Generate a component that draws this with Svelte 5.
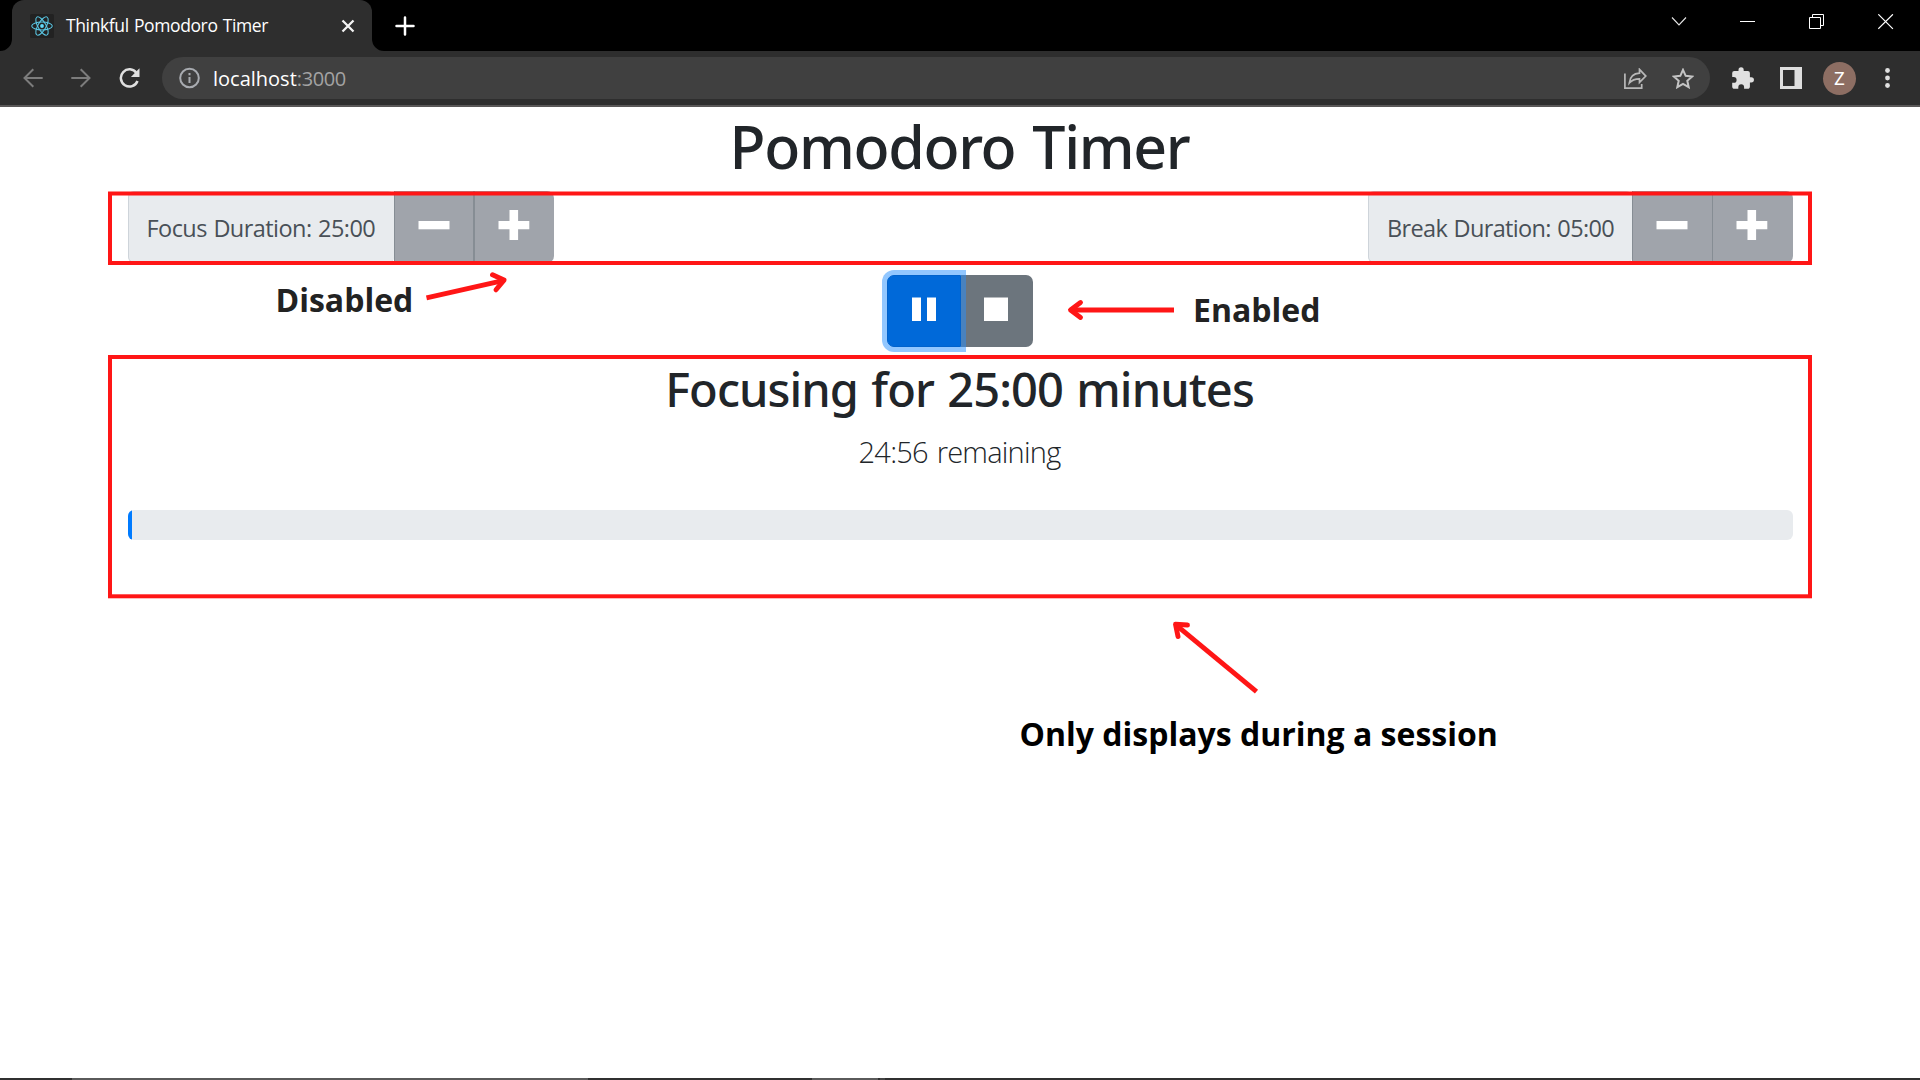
<script>
  const focusLabel = 'Focus Duration: 25:00';
  const breakLabel = 'Break Duration: 05:00';
  const progress = 0.25;
</script>

{#snippet minus()}
  <svg class="glyph" width="32" height="32" viewBox="0 0 32 32"><path d="M.5 12h31v8.3H.5z" fill="#fff" /></svg>
{/snippet}

{#snippet plus()}
  <svg class="glyph" width="32" height="32" viewBox="0 0 32 32"><path d="M.5 12h11V1h8.6v11h11.2v8.3H20.100V31h-8.600V20.300H.5z" fill="#fff" /></svg>
{/snippet}

<div class="window">
  <header class="tabs">
    <div class="tab">
      <svg class="favicon" width="24" height="24" viewBox="0 0 24 24">
        <rect width="24" height="24" rx="1.500" fill="#222" />
        <g fill="none" stroke="#61dafb" stroke-width="1.050" opacity=".9">
          <ellipse cx="12" cy="12" rx="10.300" ry="4" />
          <ellipse cx="12" cy="12" rx="10.300" ry="4" transform="rotate(60 12 12)" />
          <ellipse cx="12" cy="12" rx="10.300" ry="4" transform="rotate(120 12 12)" />
        </g>
        <circle cx="12" cy="12" r="1.900" fill="#61dafb" />
      </svg>
      <span class="tab-title">Thinkful Pomodoro Timer</span>
      <svg class="tab-close" width="14" height="14" viewBox="0 0 14 14"><path d="M1.500 1.500l11 11M12.500 1.500l-11 11" stroke="#f2f2f2" stroke-width="2.300" /></svg>
      <svg class="flare left" width="12" height="12" viewBox="0 0 12 12"><path d="M12 0v12H0A12 12 0 0 0 12 0z" fill="#2e2e2e" /></svg>
      <svg class="flare right" width="12" height="12" viewBox="0 0 12 12"><path d="M0 0v12h12A12 12 0 0 1 0 0z" fill="#2e2e2e" /></svg>
    </div>
    <svg class="new-tab" width="20" height="20" viewBox="0 0 20 20"><path d="M10 1.500v17M1.500 10h17" stroke="#fff" stroke-width="2.500" stroke-linecap="round" /></svg>
    <div class="controls">
      <svg width="16" height="16" viewBox="0 0 16 16"><path d="M1 3.500l7 7.500 7-7.500" fill="none" stroke="#e6e6e6" stroke-width="1.100" /></svg>
      <svg width="16" height="16" viewBox="0 0 16 16"><path d="M0 7.500h15" stroke="#fff" stroke-width="1" /></svg>
      <svg width="16" height="16" viewBox="0 0 16 16"><path d="M.5 3.500h11v11H.5zM3.500 3.500v-3h11v11h-3" fill="none" stroke="#fff" /></svg>
      <svg width="16" height="16" viewBox="0 0 16 16"><path d="M.3.300l14.600 14.600M14.900.300L.3 14.900" stroke="#fff" stroke-width="1.200" /></svg>
    </div>
  </header>

  <nav class="toolbar">
    <svg class="back" width="20" height="20" viewBox="0 0 20 20"><path d="M19.700 10H1.500M10.300 1.200L1.500 10l8.800 8.800" fill="none" stroke="#7c7c7c" stroke-width="2" /></svg>
    <svg class="forward" width="20" height="20" viewBox="0 0 20 20"><path d="M.3 10h18.200M9.700 1.200l8.800 8.800-8.800 8.800" fill="none" stroke="#7c7c7c" stroke-width="2" /></svg>
    <svg class="reload" width="21" height="20" viewBox="0 0 21 20"><path d="M17.500 5A8.600 8.600 0 1 0 18.500 13" fill="none" stroke="#e0e0e0" stroke-width="2.500" /><path d="M20.500.300v8.600h-8.600z" fill="#e0e0e0" /></svg>
    <div class="address">
      <svg class="info" width="22" height="22" viewBox="0 0 22 22"><circle cx="10.500" cy="11" r="9.300" fill="none" stroke="#a8abb0" stroke-width="2" /><path d="M9.500 10h2v6h-2zM9.500 6h2v2.200h-2z" fill="#a8abb0" /></svg>
      <span class="url">localhost<span>:3000</span></span>
      <svg class="share" width="23" height="21" viewBox="0 0 23 21"><g fill="none" stroke="#b8b8b8" stroke-width="1.700"><path d="M.9 5.500v14.600h16.800v-4" /><path d="M5.300 15C6 9 9.500 5.500 15.500 5.200V1.400l6.300 6.700-6.300 6.300v-3.600c-4.600 0-7.600 1.200-10.200 4.200z" /></g></svg>
      <svg class="star" width="22" height="21" viewBox="0 0 22 21"><path d="M11 1.800l2.700 6 6.500.7-4.900 4.300 1.400 6.400L11 15.900l-5.700 3.300 1.400-6.400L1.800 8.500l6.500-.7z" fill="none" stroke="#c4c4c4" stroke-width="2" /></svg>
    </div>
    <svg class="puzzle" width="22" height="22" viewBox="0 0 22 22"><path d="M19.300 10.200h-1.400V6.100a2.100 2.100 0 0 0-2.100-2.100h-4.100V2.900a2.600 2.600 0 0 0-5.200 0V4H2.300A2.100 2.100 0 0 0 .2 6.100V10h1.500a2.900 2.900 0 0 1 0 5.800H.2v3.900c0 1.200.9 2.100 2.100 2.100h4v-1.600a2.900 2.900 0 0 1 5.800 0v1.600h3.700c1.200 0 2.100-.9 2.100-2.100v-4.200h1.400a2.650 2.650 0 0 0 0-5.300z" fill="#e0e0e0" /></svg>
    <svg class="panel" width="22" height="22" viewBox="0 0 22 22"><path fill-rule="evenodd" d="M0 0h22v22H0zM3 3v16h11.500V3z" fill="#dedede" /></svg>
    <div class="avatar">Z</div>
    <svg class="dots" width="5" height="20" viewBox="0 0 5 20" fill="#e0e0e0"><circle cx="2.500" cy="2.500" r="2.400" /><circle cx="2.500" cy="10" r="2.400" /><circle cx="2.500" cy="17.500" r="2.400" /></svg>
  </nav>

  <main>
    <h1>Pomodoro Timer</h1>
    <section class="durations">
      <div class="group focus">
        <span class="label">{focusLabel}</span>
        <button disabled aria-label="Decrease focus">{@render minus()}</button>
        <button disabled aria-label="Increase focus">{@render plus()}</button>
      </div>
      <div class="group break">
        <span class="label">{breakLabel}</span>
        <button disabled aria-label="Decrease break">{@render minus()}</button>
        <button disabled aria-label="Increase break">{@render plus()}</button>
      </div>
    </section>
    <section class="playback">
      <button class="pause" aria-label="Pause">
        <svg width="24" height="24" viewBox="0 0 24 24"><path d="M0 .500h9V24H0zM15 .500h9V24h-9z" fill="#fff" /></svg>
      </button>
      <button class="stop" aria-label="Stop">
        <svg width="24" height="24" viewBox="0 0 24 24"><path d="M0 .500h24V24H0z" fill="#fff" /></svg>
      </button>
    </section>
    <h2>Focusing for 25:00 minutes</h2>
    <p class="lead">24:56 remaining</p>
    <div class="progress"><div class="bar" style="width: {progress}%"></div></div>
  </main>

  <footer class="taskbar"><i class="wide"></i><i class="short"></i><i class="sliver"></i></footer>

  <svg class="marks" width="1920" height="1080" viewBox="0 0 1920 1080" fill="none" stroke="#ff1616">
    <g stroke-width="4">
      <rect x="110" y="193.500" width="1700" height="69.500" />
      <rect x="110" y="357" width="1700" height="239.300" />
    </g>
    <g stroke-width="4.900" stroke-linejoin="round">
      <path d="M426.500 297.800L503 280.600" />
      <path d="M492.500 274.800L504 280.100L496 289.800" stroke-linecap="round" />
      <path d="M1174 310H1071" />
      <path d="M1080.500 302.500L1070.500 310l10 7.500" stroke-linecap="round" />
      <path d="M1256.500 691.600L1176.500 625.300" />
      <path d="M1187.500 625L1175.500 624.300l2.500 12.200" stroke-linecap="round" />
    </g>
  </svg>
  <span class="note disabled">Disabled</span>
  <span class="note enabled">Enabled</span>
  <span class="note session">Only displays during a session</span>
</div>

<style>
  :global(body) { margin: 0; background: #fff; overflow: hidden; }
  .window {
    position: relative;
    display: flex;
    flex-direction: column;
    width: 1920px;
    height: 1080px;
    overflow: hidden;
    font-family: "Open Sans", "Noto Sans", sans-serif;
    background: #fff;
  }
  svg { display: block; flex: none; }
  .tabs { display: flex; height: 51px; background: #000; }
  .tab {
    position: relative;
    display: flex;
    align-items: flex-start;
    box-sizing: border-box;
    width: 360px;
    margin-left: 12px;
    padding: 0 17px 0 18px;
    border-radius: 12px 12px 0 0;
    background: #2e2e2e;
  }
  .favicon { margin-top: 14px; }
  .tab-title {
    flex: 1;
    margin: 13px 0 0 12px;
    font-size: 17.5px;
    line-height: 24px;
    letter-spacing: -.38px;
    word-spacing: 1px;
    color: #fff;
    white-space: nowrap;
  }
  .tab-close { margin-top: 18.500px; }
  .flare { position: absolute; bottom: 0; }
  .left { left: -12px; }
  .right { right: -12px; }
  .new-tab { margin: 15.500px 0 0 23px; }
  .controls { display: flex; gap: 53px; margin: 14px 26px 0 auto; }

  .toolbar {
    display: flex;
    align-items: center;
    box-sizing: border-box;
    height: 56px;
    border-bottom: 2px solid #595757;
    background: #2e2e2e;
  }
  .back { margin-left: 23px; }
  .forward { margin-left: 28px; }
  .reload { margin: 0 22px 0 28px; }
  .address {
    display: flex;
    align-items: center;
    box-sizing: border-box;
    width: 1548px;
    height: 42px;
    padding: 0 16px 0 17px;
    border-radius: 21px;
    background: #404040;
  }
  .url {
    flex: 1;
    margin-left: 12px;
    padding-top: 1px;
    font-size: 20px;
    line-height: 28px;
    color: #fff;
  }
  .url span { color: #a3a3a3; letter-spacing: -.4px; }
  .share { margin-right: 25px; }
  .puzzle { margin-left: 22px; }
  .panel { margin-left: 26px; }
  .avatar {
    width: 33px;
    height: 33px;
    margin: 0 29px 0 21px;
    border-radius: 50%;
    background: #8d6e63;
    color: #fff;
    font: 18px/34px Roboto, sans-serif;
    text-align: center;
  }

  main { flex: 1; padding: 3px 127px 0 128px; color: #212529; }
  h1, h2 { margin: 0 1px 0 -1px; font-family: "Noto Sans", sans-serif; font-weight: 500; text-align: center; }
  h1 { font-size: 59px; line-height: 72px; letter-spacing: -1.330px; word-spacing: 3px; }
  .durations { display: flex; justify-content: space-between; margin-top: 9px; }
  .group { display: flex; height: 72px; }
  .label {
    box-sizing: border-box;
    padding: 1px 0 0 17.500px;
    border: 1px solid #ced4da;
    border-right: 0;
    border-radius: 6px;
    background: #e8ebee;
    color: #495057;
    font-size: 23.5px;
    line-height: 70px;
    white-space: nowrap;
  }
  .focus .label { width: 266px; letter-spacing: -.560px; word-spacing: 1px; }
  .break .label { width: 264px; padding-left: 18px; letter-spacing: -.650px; word-spacing: 1px; }
  button {
    display: flex;
    align-items: center;
    justify-content: center;
    box-sizing: border-box;
    padding: 0;
    border: 0;
  }
  .group button { width: 80px; padding-right: 2px; border-left: 1px solid #868d94; background: #a0a4ab; }
  .group button:last-child { border-left-width: 2px; border-radius: 0 7px 7px 0; padding-right: 3px; }
  .focus button:nth-child(2) { width: 79px; padding-right: 0; }
  .break button:last-child { width: 81px; border-left-width: 1px; }
  .glyph { margin-bottom: 5px; }
  .focus button:last-child { width: 81px; padding-right: 2px; }

  .playback { display: flex; height: 72px; margin: 12px 0 0 759px; }
  .playback svg { margin-bottom: 5px; }
  .pause {
    position: relative;
    width: 74px;
    border: 1px solid #0062cc;
    border-radius: 7px 0 0 7px;
    background: #0069d9;
    box-shadow: 0 0 0 5px rgba(38, 143, 255, .5);
  }
  .stop { width: 72px; padding-right: 2px; border-radius: 0 7px 7px 0; background: #6c757d; }
  h2 { margin-top: 13px; font-size: 47px; line-height: 59px; letter-spacing: -.920px; word-spacing: 2px; }
  .lead {
    margin: 10px 1px 0 -1px;
    font-size: 29px;
    font-weight: 300;
    line-height: 45px;
    letter-spacing: -.760px;
    word-spacing: 2px;
    text-align: center;
  }
  .progress { height: 30px; margin-top: 36px; overflow: hidden; border-radius: 6px; background: #e8ebee; }
  .bar { height: 100%; background: #007bff; }

  .taskbar { display: flex; height: 2px; background: #303030; }
  .taskbar i { background: #5a5a5a; }
  .wide { width: 516px; margin-left: 72px; }
  .short { width: 66px; margin-left: 224px; }
  .sliver { width: 5px; margin-left: 2px; opacity: .5; }

  .marks { position: absolute; inset: 0; pointer-events: none; }
  .note {
    position: absolute;
    font-weight: 700;
    font-size: 32px;
    line-height: 44px;
    white-space: nowrap;
    color: #222;
  }
  .disabled { left: 275.5px; top: 278px; }
  .enabled { left: 1193px; top: 288px; }
  .session { left: 1019.5px; top: 712px; color: #000; }
</style>
